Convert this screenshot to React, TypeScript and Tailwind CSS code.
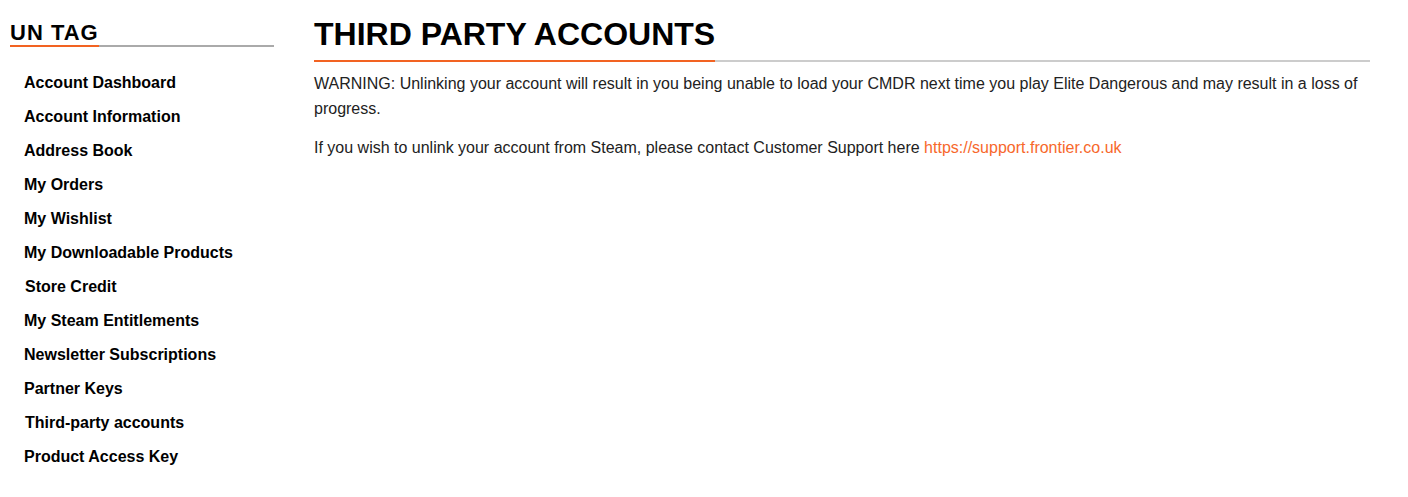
const navLinks = [
  { label: "Account Dashboard" },
  { label: "Account Information" },
  { label: "Address Book" },
  { label: "My Orders" },
  { label: "My Wishlist" },
  { label: "My Downloadable Products" },
  { label: "Store Credit", nudge: true },
  { label: "My Steam Entitlements" },
  { label: "Newsletter Subscriptions" },
  { label: "Partner Keys" },
  { label: "Third-party accounts", nudge: true },
  { label: "Product Access Key" },
];

export default function App() {
  return (
    <div className="min-h-[497px] bg-white font-['Liberation_Sans',Arial,sans-serif] text-[#222]">
      <div className="flex pt-4 pr-[38px]">
        {/* Sidebar */}
        <aside className="ml-[10px] w-[264px] shrink-0 pt-[5px]">
          <div className="border-b-2 border-[#aaaaaa]">
            <h2 className="-mb-[2px] w-fit border-b-2 border-[#f26322] text-[22px] font-bold leading-[24px] tracking-[1px] text-black">
              UN TAG
            </h2>
          </div>
          <ul className="mt-[19px] pl-[14px]">
            {navLinks.map((link) => (
              <li
                key={link.label}
                className={`text-[16px] font-bold leading-[34px] text-black ${link.nudge ? "pl-px" : ""}`}
              >
                <a href="#">{link.label}</a>
              </li>
            ))}
          </ul>
        </aside>

        {/* Main content */}
        <main className="ml-10 flex-1">
          <div className="border-b-2 border-[#cccccc]">
            <h1 className="-mb-[2px] w-fit border-b-2 border-[#f26322] pb-2 text-[32px] font-bold leading-[36px] text-black">
              THIRD PARTY ACCOUNTS
            </h1>
          </div>
          <div className="mt-[9px] text-[16px] leading-[25px] text-[#222]">
            <p className="mb-[14px]">
              WARNING: Unlinking your account will result in you being unable to load your CMDR next
              time you play Elite Dangerous and may result in a loss of progress.
            </p>
            <p>
              If you wish to unlink your account from Steam, please contact Customer Support here{" "}
              <a href="#" className="text-[#f7682b]">
                https://support.frontier.co.uk
              </a>
            </p>
          </div>
        </main>
      </div>
    </div>
  );
}
